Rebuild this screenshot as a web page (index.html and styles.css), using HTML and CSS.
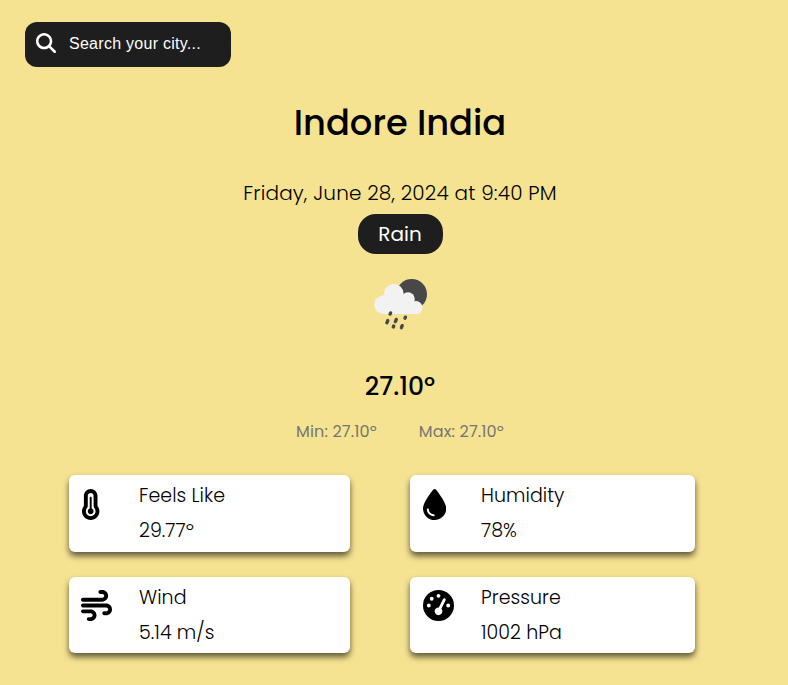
FILE: index.html
```html
<!DOCTYPE html>
<html lang="en">
<head>
<meta charset="utf-8">
<title>Weather</title>
<link rel="stylesheet" href="styles.css">
</head>
<body>
<main class="app">
  <label class="search">
    <svg class="search-icon" viewBox="0 0 512 512"><path d="M416 208c0 45.9-14.9 88.3-40 122.7L502.6 457.4c12.5 12.5 12.5 32.8 0 45.3s-32.8 12.5-45.3 0L330.7 376c-34.4 25.2-76.8 40-122.7 40C93.1 416 0 322.9 0 208S93.1 0 208 0S416 93.1 416 208zM208 352a144 144 0 1 0 0-288 144 144 0 1 0 0 288z"/></svg>
    <input class="search-input" type="text" placeholder="Search your city...">
  </label>
  <section class="summary">
    <h1 class="city">Indore India</h1>
    <p class="date">Friday, June 28, 2024 at 9:40 PM</p>
    <p class="condition">Rain</p>
    <svg class="weather" viewBox="0 0 80 75">
      <circle cx="51.7" cy="29.3" r="15.3" fill="#484848"/>
      <g fill="#f2f2f2">
        <circle cx="23.4" cy="39.8" r="9.2"/>
        <circle cx="33.8" cy="28.8" r="9.8"/>
        <circle cx="48" cy="34" r="6.8"/>
        <circle cx="56" cy="42.6" r="6.5"/>
        <path d="M23 30h26l8 10v9.1H23z"/>
      </g>
      <path d="M30.6 47.9l-.5 1.2M27.8 55.6l-.9 2.2M36.3 54.4l-.9 2.2M45.4 52.2l-.4 1M33.7 61l-.4 1M42.2 60.7l-.8 2" fill="none" stroke="#484848" stroke-width="3.4" stroke-linecap="round"/>
    </svg>
    <p class="temp">27.10º</p>
    <p class="range"><span>Min: 27.10º</span><span>Max: 27.10º</span></p>
  </section>
  <section class="cards">
    <article class="card">
      <svg class="icon" viewBox="0 0 320 512"><path d="M160 64c-26.5 0-48 21.5-48 48V276.5c0 17.3-7.1 31.9-15.3 42.5C86.2 332.6 80 349.5 80 368c0 44.2 35.8 80 80 80s80-35.8 80-80c0-18.5-6.2-35.4-16.7-48.9c-8.2-10.6-15.3-25.2-15.3-42.5V112c0-26.5-21.5-48-48-48zM48 112C48 50.2 98.1 0 160 0s112 50.1 112 112V276.5c0 .1 .1 .3 .2 .6c.2 .6 .8 1.6 1.7 2.8c18.9 24.4 30.1 55 30.1 88.1c0 79.5-64.5 144-144 144S16 447.5 16 368c0-33.2 11.2-63.8 30.1-88.1c.9-1.2 1.5-2.2 1.7-2.8c.1-.3 .2-.5 .2-.6V112zM208 368c0 26.5-21.5 48-48 48s-48-21.5-48-48c0-20.9 13.4-38.7 32-45.3V144c0-8.8 7.2-16 16-16s16 7.2 16 16V322.7c18.6 6.6 32 24.4 32 45.3z"/></svg>
      <div class="info"><p>Feels Like</p><p>29.77º</p></div>
    </article>
    <article class="card">
      <svg class="icon" viewBox="0 0 384 512"><path d="M192 512C86 512 0 426 0 320C0 228.8 130.2 57.7 166.6 11.7C172.6 4.2 181.5 0 191.1 0h1.8c9.6 0 18.5 4.2 24.5 11.7C253.8 57.7 384 228.8 384 320c0 106-86 192-192 192zM96 336c0-8.8-7.2-16-16-16s-16 7.2-16 16c0 61.9 50.1 112 112 112c8.8 0 16-7.2 16-16s-7.2-16-16-16c-44.2 0-80-35.8-80-80z"/></svg>
      <div class="info"><p>Humidity</p><p>78%</p></div>
    </article>
    <article class="card">
      <svg class="icon" viewBox="0 0 512 512"><path d="M288 32c0 17.7 14.3 32 32 32h32c17.7 0 32 14.3 32 32s-14.3 32-32 32H32c-17.7 0-32 14.3-32 32s14.3 32 32 32H352c53 0 96-43 96-96s-43-96-96-96H320c-17.7 0-32 14.3-32 32zm64 352c0 17.7 14.3 32 32 32h32c53 0 96-43 96-96s-43-96-96-96H32c-17.7 0-32 14.3-32 32s14.3 32 32 32H416c17.7 0 32 14.3 32 32s-14.3 32-32 32H384c-17.7 0-32 14.3-32 32zM128 512h32c53 0 96-43 96-96s-43-96-96-96H32c-17.7 0-32 14.3-32 32s14.3 32 32 32H160c17.7 0 32 14.3 32 32s-14.3 32-32 32H128c-17.7 0-32 14.3-32 32s14.3 32 32 32z"/></svg>
      <div class="info"><p>Wind</p><p>5.14 m/s</p></div>
    </article>
    <article class="card">
      <svg class="icon" viewBox="0 0 512 512"><path d="M0 256a256 256 0 1 1 512 0A256 256 0 1 1 0 256zM288 96a32 32 0 1 0 -64 0 32 32 0 1 0 64 0zM256 416c35.3 0 64-28.7 64-64c0-16.2-6-31.1-16-42.3l69.5-138.9c5.9-11.9 1.1-26.3-10.7-32.2s-26.3-1.1-32.2 10.7L261.1 288.2c-1.7-.1-3.4-.2-5.1-.2c-35.3 0-64 28.7-64 64s28.7 64 64 64zM176 144a32 32 0 1 0 -64 0 32 32 0 1 0 64 0zM96 288a32 32 0 1 0 0-64 32 32 0 1 0 0 64zm352-32a32 32 0 1 0 -64 0 32 32 0 1 0 64 0z"/></svg>
      <div class="info"><p>Pressure</p><p>1002 hPa</p></div>
    </article>
  </section>
</main>
</body>
</html>
```
FILE: styles.css
```css
* { box-sizing: border-box; margin: 0; padding: 0; }
body {
  background: #f6e391;
  color: #000;
  font-family: Poppins, Inter, "Open Sans", sans-serif;
  font-weight: 300;
}
.app { height: 685px; padding: 22px 0 0 25px; overflow: hidden; }
.search {
  display: flex;
  align-items: center;
  width: 206px;
  height: 45px;
  padding: 0 11px;
  gap: 13px;
  border-radius: 12px;
  background: #1e1e1e;
}
.search-icon { width: 20px; height: 20px; flex: none; fill: #fff; margin-bottom: 3px; }
.search-input {
  width: 150px;
  min-width: 0;
  border: 0;
  outline: 0;
  background: transparent;
  color: #fff;
  font: 16px "Liberation Sans", Arial, sans-serif;
  letter-spacing: .27px;
  margin-bottom: 2px;
}
.search-input::placeholder { color: #fff; opacity: 1; }
.summary {
  display: flex;
  flex-direction: column;
  align-items: center;
  width: 750px;
  height: 408px;
  padding-top: 29px;
}
.city { font-size: 35.3px; font-weight: 500; line-height: 54px; white-space: nowrap; }
.date { margin-top: 28px; font-size: 20px; letter-spacing: .17px; line-height: 30px; white-space: nowrap; }
.condition {
  display: flex;
  align-items: center;
  justify-content: center;
  width: 85px;
  height: 40px;
  margin-top: 6px;
  border-radius: 18px;
  background: #1e1e1e;
  color: #fff;
  font-size: 20px;
  font-weight: 400;
}
.weather { width: 80px; height: 75px; margin-top: 11px; flex: none; }
.temp { margin-top: 28px; font-size: 25px; font-weight: 500; line-height: 38px; }
.range {
  display: flex;
  gap: 42px;
  margin-top: 14px;
  color: #757575;
  font-size: 16px;
  font-weight: 400;
  letter-spacing: .15px;
  line-height: 24px;
}
.cards {
  display: grid;
  grid-template-columns: 281px 285px;
  grid-template-rows: 77px 76px;
  column-gap: 60px;
  row-gap: 25px;
  padding-left: 44px;
}
.card {
  display: flex;
  border-radius: 6px;
  background: #fff;
  box-shadow: 0 4px 6px rgba(0, 0, 0, .62);
  padding-left: 12px;
}
.card:nth-child(even) { padding-left: 13px; }
.icon { height: 31px; margin-top: 14px; flex: none; }
.card:nth-child(n+3) .icon { margin-top: 13px; }
.info { flex: none; margin-left: auto; width: 211px; padding-top: 6px; font-size: 19px; letter-spacing: .05px; line-height: 30px; }
.card:nth-child(even) .info { width: 214px; }
.info p + p { margin-top: 5px; }
```
